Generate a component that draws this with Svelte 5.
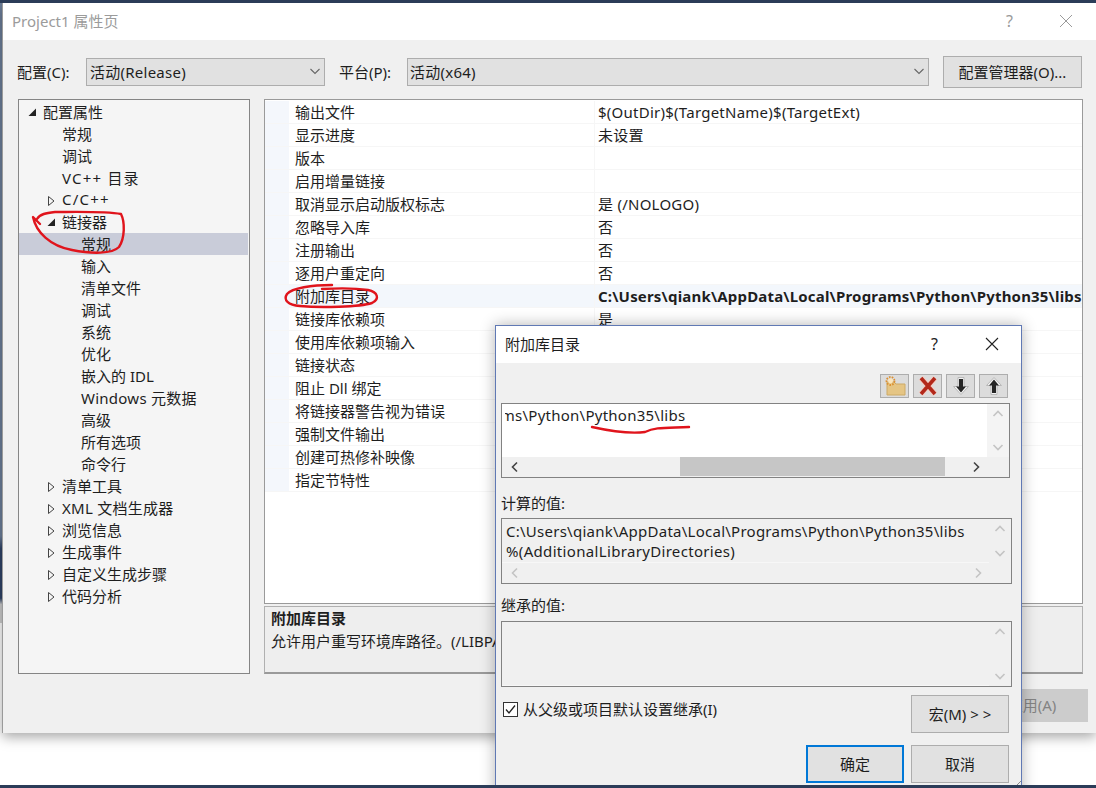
<script>
  const tree = [
    { label: "配置属性", depth: 0, arrow: "open" },
    { label: "常规", depth: 1 },
    { label: "调试", depth: 1 },
    { label: "VC++ 目录", depth: 1, plus: true },
    { label: "C/C++", depth: 1, arrow: "closed", plus: true },
    { label: "链接器", depth: 1, arrow: "open" },
    { label: "常规", depth: 2, selected: true },
    { label: "输入", depth: 2 },
    { label: "清单文件", depth: 2 },
    { label: "调试", depth: 2 },
    { label: "系统", depth: 2 },
    { label: "优化", depth: 2 },
    { label: "嵌入的 IDL", depth: 2 },
    { label: "Windows 元数据", depth: 2, wide: true },
    { label: "高级", depth: 2 },
    { label: "所有选项", depth: 2 },
    { label: "命令行", depth: 2 },
    { label: "清单工具", depth: 1, arrow: "closed" },
    { label: "XML 文档生成器", depth: 1, arrow: "closed", wide: true },
    { label: "浏览信息", depth: 1, arrow: "closed" },
    { label: "生成事件", depth: 1, arrow: "closed" },
    { label: "自定义生成步骤", depth: 1, arrow: "closed" },
    { label: "代码分析", depth: 1, arrow: "closed" },
  ];

  const props = [
    ["输出文件", "$(OutDir)$(TargetName)$(TargetExt)"],
    ["显示进度", "未设置"],
    ["版本", ""],
    ["启用增量链接", ""],
    ["取消显示启动版权标志", "是 (/NOLOGO)"],
    ["忽略导入库", "否"],
    ["注册输出", "否"],
    ["逐用户重定向", "否"],
    ["附加库目录", "C:\\Users\\qiank\\AppData\\Local\\Programs\\Python\\Python35\\libs;%(AdditionalLibraryDirectories)"],
    ["链接库依赖项", "是"],
    ["使用库依赖项输入", "否"],
    ["链接状态", ""],
    ["阻止 Dll 绑定", ""],
    ["将链接器警告视为错误", "否"],
    ["强制文件输出", ""],
    ["创建可热修补映像", ""],
    ["指定节特性", ""],
  ];
</script>

{#snippet chevron(dir, color, sw = 1.6)}
  <svg class="chev" width="12" height="12" viewBox="0 0 12 12">
    {#if dir === "up"}
      <path d="M1.5 8 L6 3.5 L10.5 8" fill="none" stroke={color} stroke-width={sw} />
    {:else if dir === "down"}
      <path d="M1.5 4 L6 8.5 L10.5 4" fill="none" stroke={color} stroke-width={sw} />
    {:else if dir === "left"}
      <path d="M8 1.5 L3.5 6 L8 10.5" fill="none" stroke={color} stroke-width={sw} />
    {:else}
      <path d="M4 1.5 L8.5 6 L4 10.5" fill="none" stroke={color} stroke-width={sw} />
    {/if}
  </svg>
{/snippet}

<div class="desktop">
  <div class="left-strip"></div>

  <div class="window main">
    <div class="titlebar">
      <span class="title">Project1 属性页</span>
      <span class="help grey">?</span>
      <svg class="close" width="16" height="16" viewBox="0 0 16 16"><path d="M2 2 L14 14 M14 2 L2 14" stroke="#9a9a9a" stroke-width="1" fill="none" /></svg>
    </div>

    <div class="config">
      <span class="cfg-label">配置(C):</span>
      <div class="select sel-config"><span class="latin">活动(Release)</span>{@render chevron("down", "#666", 1.1)}</div>
      <span class="cfg-label plat">平台(P):</span>
      <div class="select sel-plat"><span class="latin">活动(x64)</span>{@render chevron("down", "#666", 1.1)}</div>
      <button class="btn manager">配置管理器(O)...</button>
    </div>

    <div class="panels">
      <div class="tree">
        {#each tree as item}
          <div class="node d{item.depth}" class:selected={item.selected}>
            {#if item.arrow === "open"}
              <svg class="arrow" width="10" height="10" viewBox="0 0 10 10"><path d="M9 1.5 V9 H1.5 Z" fill="#222" /></svg>
            {:else if item.arrow === "closed"}
              <svg class="arrow" width="10" height="12" viewBox="0 0 10 12"><path d="M2.5 1.5 L8 6 L2.5 10.5 Z" fill="none" stroke="#444" stroke-width="1" /></svg>
            {/if}
            <span class:latin={item.wide} class:plus={item.plus}>{item.label}</span>
          </div>
        {/each}
      </div>

      <div class="right">
        <div class="grid">
          {#each props as [name, value], i}
            <div class="row" class:current={i === 8}>
              <div class="gutter"></div>
              <div class="name">{name}</div>
              <div class="value" class:bold={i === 8} class:latin={i !== 8}>{value}</div>
            </div>
          {/each}
        </div>
        <div class="desc">
          <div class="desc-title">附加库目录</div>
          <div>允许用户重写环境库路径。(/LIBPATH:[dir])</div>
        </div>
      </div>
    </div>

    <div class="footer">
      <button class="btn apply">应用(A)</button>
    </div>
  </div>

  <div class="window dialog">
    <div class="titlebar dlg-title">
      <span class="title dark">附加库目录</span>
      <span class="help">?</span>
      <svg class="close" width="16" height="16" viewBox="0 0 16 16"><path d="M2 2 L14 14 M14 2 L2 14" stroke="#222" stroke-width="1.1" fill="none" /></svg>
    </div>

    <div class="toolbar">
      <button class="tool" aria-label="新行">
        <svg width="26" height="22" viewBox="0 0 26 22">
          <path d="M5 7 H12 L14 9 H23 V20 H5 Z" fill="#e5c584" stroke="#cdaa66" stroke-width="1" />
          <circle cx="8.5" cy="6" r="2.4" fill="#fbe6bd" />
          <circle cx="8.5" cy="6" r="4" fill="none" stroke="#dc8f30" stroke-width="1.8" stroke-dasharray="1.6 1.2" />
        </svg>
      </button>
      <button class="tool" aria-label="删除">
        <svg width="24" height="22" viewBox="0 0 24 22">
          <path d="M5 3 L19 19 M19 3 L5 19" stroke="#f0d0c8" stroke-width="6" fill="none" />
          <path d="M5 3 L19 19 M19 3 L5 19" stroke="#b3281a" stroke-width="3.6" fill="none" />
        </svg>
      </button>
      <button class="tool" aria-label="下移">
        <svg width="20" height="20" viewBox="0 0 20 20">
          <path d="M10 18.5 L2.5 10.5 H7 V1.5 H13 V10.5 H17.5 Z" fill="#f4f4f4" stroke="#b8b8b8" stroke-width="1" />
          <path d="M10 16.5 L5 10.5 H8 V3 H12 V10.5 H15 Z" fill="#262626" />
        </svg>
      </button>
      <button class="tool" aria-label="上移">
        <svg width="20" height="20" viewBox="0 0 20 20">
          <path d="M10 1.5 L2.5 9.5 H7 V18.5 H13 V9.5 H17.5 Z" fill="#f4f4f4" stroke="#b8b8b8" stroke-width="1" />
          <path d="M10 3.5 L5 9.5 H8 V17 H12 V9.5 H15 Z" fill="#262626" />
        </svg>
      </button>
    </div>

    <div class="box edit">
      <div class="box-text white"><div class="clip"><span class="scrolled latin">rams\Python\Python35\libs</span></div></div>
      <div class="vbar white-bar">{@render chevron("up", "#c4c4c4")}{@render chevron("down", "#c4c4c4")}</div>
      <div class="hbar">
        {@render chevron("left", "#444")}
        <div class="thumb"></div>
        {@render chevron("right", "#444")}
      </div>
    </div>

    <div class="cap first">计算的值:</div>
    <div class="box readonly">
      <div class="box-text latin">C:\Users\qiank\AppData\Local\Programs\Python\Python35\libs<br /><span class="more">%(AdditionalLibraryDirectories)</span></div>
      <div class="vbar">{@render chevron("up", "#c4c4c4")}{@render chevron("down", "#c4c4c4")}</div>
      <div class="hbar faint">{@render chevron("left", "#c4c4c4")}{@render chevron("right", "#c4c4c4")}</div>
    </div>

    <div class="cap second">继承的值:</div>
    <div class="box inherited">
      <div class="box-text"></div>
      <div class="vbar">{@render chevron("up", "#c4c4c4")}{@render chevron("down", "#c4c4c4")}</div>
    </div>

    <div class="inherit-row">
      <span class="checkbox">
        <svg width="13" height="13" viewBox="0 0 13 13"><path d="M2 6.5 L5 10 L11 2.5" fill="none" stroke="#222" stroke-width="1.3" /></svg>
      </span>
      <span class="check-label">从父级或项目默认设置继承(I)</span>
      <button class="btn dlg-btn macro">宏(M) &gt; &gt;</button>
    </div>

    <div class="dlg-actions">
      <button class="btn dlg-btn default">确定</button>
      <button class="btn dlg-btn">取消</button>
    </div>
  </div>

  <svg class="ink" width="1096" height="788" viewBox="0 0 1096 788">
    <g fill="none" stroke="#e0141c" stroke-width="2.4" stroke-linecap="round" stroke-linejoin="round">
      <path d="M40 224 L33 217 C36 232 50 246 72 250 C92 254 112 254 119 247 C125 238 125 222 121 214 C105 211 72 212 55 212 C46 213 40 214 37 219" />
      <path d="M332 285 C312 285 292 288 287 294 C283 300 288 305 300 306 C320 308 360 307 372 303 C380 299 378 292 368 290 C355 288 340 288 322 289" />
      <path d="M592 427 C610 431 630 434 645 432 C655 427 665 428 689 427" />
    </g>
    <path d="M1021 781 L1016 786 M1021 785 L1019 787" stroke="#8a8a8a" stroke-width="1" fill="none" />
  </svg>
</div>

<style>
  :global(body) {
    margin: 0;
    background: #fff;
  }
  .desktop {
    position: relative;
    width: 1096px;
    height: 788px;
    overflow: hidden;
    background: #fff;
    border-top: 3px solid #2b3c58;
    border-bottom: 3px solid #2b3c58;
    box-sizing: border-box;
    font-family: "Noto Sans", "Noto Sans CJK SC", sans-serif;
    font-size: 15px;
    color: #1e1e1e;
  }
  .latin {
    letter-spacing: 0.25px;
  }
  .plus {
    letter-spacing: 1.2px;
  }
  .more {
    letter-spacing: 0.33px;
  }
  .left-strip {
    position: absolute;
    left: 0;
    top: 0;
    width: 2px;
    height: 620px;
    background: linear-gradient(#6d7f9b 0 86%, #2f4468 88% 96%, #cfcfcf 97%);
  }
  .window {
    position: absolute;
    box-sizing: border-box;
    background: #f0f0f0;
  }
  .main {
    left: 2px;
    top: 0;
    width: 1094px;
    height: 730px;
    border-left: 1px solid #9a9a9a;
    box-shadow: 0 4px 12px rgba(0, 0, 0, 0.35);
  }
  .titlebar {
    height: 37px;
    box-sizing: border-box;
    padding-bottom: 2px;
    background: #fff;
    display: flex;
    align-items: center;
    padding-left: 9px;
  }
  .title {
    flex: 1;
    color: #9b9b9b;
  }
  .title.dark {
    color: #1e1e1e;
  }
  .help {
    font-size: 16px;
    color: #222;
  }
  .help.grey {
    color: #9a9a9a;
    margin-right: 45px;
  }
  .close {
    margin-right: 22px;
  }
  .config {
    display: flex;
    align-items: center;
    height: 32px;
    margin-top: 16px;
    padding-left: 14px;
    padding-right: 13px;
  }
  .cfg-label {
    width: 69px;
    padding-bottom: 2px;
  }
  .cfg-label.plat {
    width: 68px;
    margin-left: 14px;
  }
  .select {
    height: 28px;
    box-sizing: border-box;
    background: #e1e1e1;
    border: 1px solid #adadad;
    display: flex;
    align-items: center;
    justify-content: space-between;
    padding: 0 3px 2px 2px;
  }
  .sel-config {
    width: 239px;
    padding-left: 3px;
  }
  .sel-plat {
    width: 522px;
  }
  .btn {
    font: inherit;
    color: #1e1e1e;
    background: #e1e1e1;
    border: 1px solid #adadad;
    padding: 0 0 2px;
  }
  .manager {
    width: 139px;
    height: 32px;
    margin-left: 14px;
  }
  .panels {
    display: flex;
    gap: 14px;
    margin-top: 11px;
    padding-left: 15px;
    height: 575px;
  }
  .tree {
    width: 232px;
    box-sizing: border-box;
    border: 1px solid #858585;
    background: #f5f5f5;
    padding-top: 1px;
  }
  .node {
    height: 22px;
    box-sizing: border-box;
    padding-bottom: 2px;
    display: flex;
    align-items: center;
    position: relative;
    white-space: nowrap;
  }
  .node.selected {
    background: #c9ccd9;
    margin-right: 1px;
  }
  .d0 { padding-left: 24px; }
  .d1 { padding-left: 43px; }
  .d2 { padding-left: 62px; }
  .arrow {
    position: absolute;
    top: 6px;
  }
  .d0 .arrow { left: 8px; }
  .d1 .arrow { left: 27px; }
  .right {
    width: 819px;
    display: flex;
    flex-direction: column;
    gap: 2px;
  }
  .grid {
    height: 505px;
    box-sizing: border-box;
    border: 1px solid #9a9a9a;
    background: #fff;
    padding-top: 1px;
    overflow: hidden;
  }
  .row {
    display: flex;
    height: 23px;
    line-height: 22px;
    box-sizing: border-box;
    border-bottom: 1px solid #f6f6f6;
    white-space: nowrap;
  }
  .row.current .name,
  .row.current .value {
    background: #f3f7fc;
  }
  .gutter {
    width: 24px;
    background: #f4f7fc;
    flex: none;
  }
  .name {
    width: 306px;
    padding-left: 6px;
    box-sizing: border-box;
    border-right: 1px solid #f6f6f6;
    flex: none;
  }
  .value {
    padding-left: 3px;
    flex: 1;
    overflow: hidden;
  }
  .value.bold {
    font-weight: 700;
    letter-spacing: 0.18px;
  }
  .desc {
    height: 68px;
    box-sizing: border-box;
    border: 1px solid #b0b0b0;
    border-bottom: 2px solid #9a9a9a;
    background: #eeeeee;
    padding: 0 6px;
    line-height: 23px;
  }
  .desc-title {
    font-weight: 700;
  }
  .footer {
    display: flex;
    justify-content: flex-end;
    padding: 15px 8px 0 0;
  }
  .apply {
    width: 112px;
    height: 33px;
    background: #cccccc;
    border-color: #cccccc;
    color: #838383;
  }
  .dialog {
    left: 495px;
    top: 322px;
    width: 527px;
    height: 480px;
    border: 1px solid #6079b4;
    box-shadow: 0 0 14px rgba(0, 0, 0, 0.3);
  }
  .dlg-title .close {
    margin-right: 21px;
  }
  .dlg-title .help {
    margin-right: 46px;
  }
  .toolbar {
    display: flex;
    justify-content: flex-end;
    gap: 4px;
    margin-top: 11px;
    padding-right: 13px;
  }
  .tool {
    width: 29px;
    height: 24px;
    padding: 0;
    box-sizing: border-box;
    background: #dcdcdc;
    border: 1px solid #adadad;
    display: flex;
    align-items: center;
    justify-content: center;
  }
  .box {
    display: grid;
    grid-template-columns: 1fr 22px;
    margin-left: 5px;
    box-sizing: border-box;
    border: 1px solid #828282;
  }
  .edit {
    width: 509px;
    height: 75px;
    margin-top: 5px;
    grid-template-rows: 53px 19px;
    background: #f0f0f0;
  }
  .readonly {
    width: 511px;
    height: 66px;
    grid-template-rows: 44px 20px;
  }
  .inherited {
    width: 511px;
    height: 66px;
    grid-template-rows: 64px;
  }
  .box-text {
    padding: 2px 0 0 4px;
    line-height: 20px;
    overflow: hidden;
    white-space: nowrap;
    border-bottom: 1px solid #f7f7f7;
  }
  .box-text.white {
    background: #fff;
    border-bottom: 0;
    padding: 1px 0 0 3px;
  }
  .clip {
    overflow: hidden;
  }
  .scrolled {
    display: inline-block;
    margin-left: -19px;
  }
  .vbar {
    display: flex;
    flex-direction: column;
    align-items: center;
    justify-content: space-between;
    padding: 4px 0;
  }
  .white-bar {
    background: #f4f4f4;
  }
  .hbar {
    grid-column: 1 / -1;
    display: flex;
    align-items: center;
    justify-content: space-between;
    position: relative;
    padding: 0 27px 0 7px;
  }
  .thumb {
    position: absolute;
    left: 178px;
    top: 0;
    width: 265px;
    height: 19px;
    background: #c6c6c6;
  }
  .hbar.faint {
    padding-right: 27px;
  }
  .cap {
    margin-left: 5px;
    height: 20px;
    line-height: 20px;
  }
  .cap.first {
    margin-top: 15px;
    margin-bottom: 5px;
  }
  .cap.second {
    margin-top: 11px;
    margin-bottom: 6px;
  }
  .inherit-row {
    display: flex;
    align-items: flex-start;
    margin-top: 8px;
    padding: 0 12px 0 7px;
  }
  .checkbox {
    width: 15px;
    height: 15px;
    margin-top: 7px;
    box-sizing: border-box;
    border: 1px solid #333;
    background: #fff;
    display: flex;
    align-items: center;
    justify-content: center;
    flex: none;
  }
  .check-label {
    margin-left: 5px;
    margin-top: 4px;
    flex: 1;
    line-height: 20px;
  }
  .dlg-btn {
    width: 98px;
    height: 38px;
  }
  .dlg-actions {
    display: flex;
    justify-content: flex-end;
    gap: 7px;
    margin-top: 12px;
    padding-right: 12px;
  }
  .dlg-btn.default {
    border: 2px solid #0078d7;
  }
  .ink {
    position: absolute;
    left: 0;
    top: -3px;
    pointer-events: none;
  }
</style>
